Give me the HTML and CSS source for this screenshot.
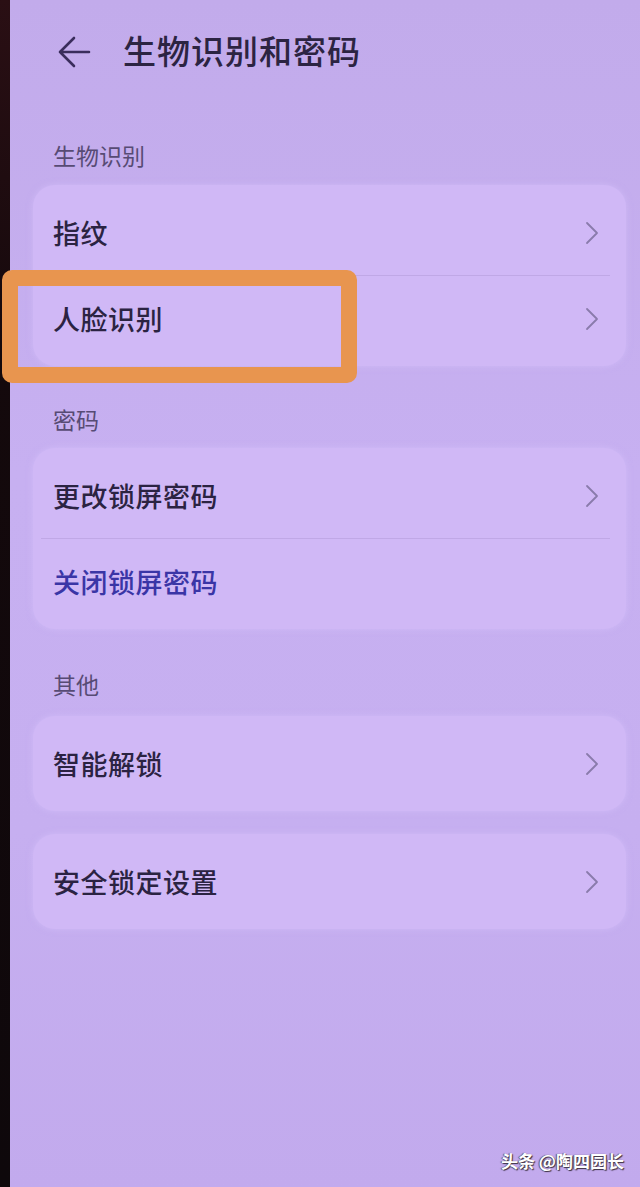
FILE: index.html
```html
<!DOCTYPE html>
<html lang="zh-CN">
<head>
<meta charset="utf-8">
<title>生物识别和密码</title>
<link rel="stylesheet" href="styles.css">
</head>
<body>
<div class="device">
  <div class="bezel"></div>
  <main class="screen">
    <header class="topbar">
      <svg class="back" width="34" height="32" viewBox="0 0 34 32" aria-hidden="true">
        <path d="M32 16 H3 M17 2 L3 16 L17 30" fill="none" stroke="#3a2d5c" stroke-width="2.6" stroke-linecap="round" stroke-linejoin="round"/>
      </svg>
      <h1 class="title">生物识别和密码</h1>
    </header>

    <div class="section-label first">生物识别</div>
    <section class="card">
      <div class="row">
        <span class="row-text">指纹</span>
        <svg class="chev" width="14" height="24" viewBox="0 0 14 24" aria-hidden="true"><path d="M2 2 L12 12 L2 22" fill="none" stroke="#8a7bab" stroke-width="1.8" stroke-linecap="round" stroke-linejoin="round"/></svg>
      </div>
      <div class="divider"></div>
      <div class="row">
        <span class="row-text">人脸识别</span>
        <svg class="chev" width="14" height="24" viewBox="0 0 14 24" aria-hidden="true"><path d="M2 2 L12 12 L2 22" fill="none" stroke="#8a7bab" stroke-width="1.8" stroke-linecap="round" stroke-linejoin="round"/></svg>
      </div>
    </section>

    <div class="section-label">密码</div>
    <section class="card">
      <div class="row">
        <span class="row-text">更改锁屏密码</span>
        <svg class="chev" width="14" height="24" viewBox="0 0 14 24" aria-hidden="true"><path d="M2 2 L12 12 L2 22" fill="none" stroke="#8a7bab" stroke-width="1.8" stroke-linecap="round" stroke-linejoin="round"/></svg>
      </div>
      <div class="divider"></div>
      <div class="row">
        <span class="row-text link">关闭锁屏密码</span>
      </div>
    </section>

    <div class="section-label tail">其他</div>
    <section class="card">
      <div class="row">
        <span class="row-text">智能解锁</span>
        <svg class="chev" width="14" height="24" viewBox="0 0 14 24" aria-hidden="true"><path d="M2 2 L12 12 L2 22" fill="none" stroke="#8a7bab" stroke-width="1.8" stroke-linecap="round" stroke-linejoin="round"/></svg>
      </div>
    </section>

    <section class="card card-spaced">
      <div class="row">
        <span class="row-text">安全锁定设置</span>
        <svg class="chev" width="14" height="24" viewBox="0 0 14 24" aria-hidden="true"><path d="M2 2 L12 12 L2 22" fill="none" stroke="#8a7bab" stroke-width="1.8" stroke-linecap="round" stroke-linejoin="round"/></svg>
      </div>
    </section>
  </main>
</div>
<div class="highlight"></div>
<div class="watermark">头条 @陶四园长</div>
</body>
</html>
```

FILE: styles.css
```css
html, body {
  margin: 0;
  padding: 0;
}

body {
  width: 640px;
  height: 1187px;
  overflow: hidden;
  position: relative;
  font-family: "Noto Sans CJK SC", "Noto Sans", sans-serif;
  background: #c4aded;
}

.device {
  display: flex;
  height: 1187px;
}

.bezel {
  width: 10px;
  flex: none;
  background: linear-gradient(180deg, #2a0f14 0%, #14090c 30%, #0e080b 100%);
}

.screen {
  flex: 1;
  background: linear-gradient(180deg, #c2abeb 0%, #c7b0f1 40%, #c6aff0 70%, #c2aaed 100%);
  padding: 0 14px 0 23px;
}

.topbar {
  display: flex;
  align-items: center;
  height: 100px;
  padding-left: 24px;
  box-sizing: border-box;
}

.back {
  flex: none;
  margin-top: 4px;
}

.title {
  margin: 0 0 0 32px;
  font-size: 33px;
  font-weight: 500;
  color: #2c2442;
  letter-spacing: 1px;
  line-height: 40px;
}

.section-label {
  margin: 38px 0 14px 20px;
  height: 30px;
  line-height: 30px;
  font-size: 23px;
  color: #574b74;
}

.section-label.first {
  margin-top: 40px;
  margin-bottom: 15px;
}

.section-label.tail {
  margin-top: 40px;
  margin-bottom: 17px;
}

.card {
  background: #d0b8f6;
  border-radius: 22px;
  padding: 5px 0;
  box-shadow: 0 0 6px rgba(220, 200, 255, 0.5);
}

.card-spaced {
  margin-top: 23px;
}

.row {
  height: 85px;
  display: flex;
  align-items: center;
  justify-content: space-between;
  padding: 0 27px 0 20px;
}

.row-text {
  font-size: 27px;
  font-weight: 500;
  color: #2b2342;
  letter-spacing: 0.5px;
}

.row-text.link {
  color: #3a35a6;
}

.chev {
  flex: none;
}

.divider {
  height: 1px;
  margin: 0 16px 0 8px;
  background: #c0a8e6;
}

.highlight {
  position: absolute;
  left: 2px;
  top: 270px;
  width: 355px;
  height: 113px;
  box-sizing: border-box;
  border: 16px solid #e8954f;
  border-radius: 10px;
}

.watermark {
  position: absolute;
  right: 16px;
  bottom: 14px;
  font-size: 17px;
  font-weight: 700;
  color: #ffffff;
  text-shadow: 1px 1px 1px #3b3040, -1px 0 1px #5a4d60;
}
```
